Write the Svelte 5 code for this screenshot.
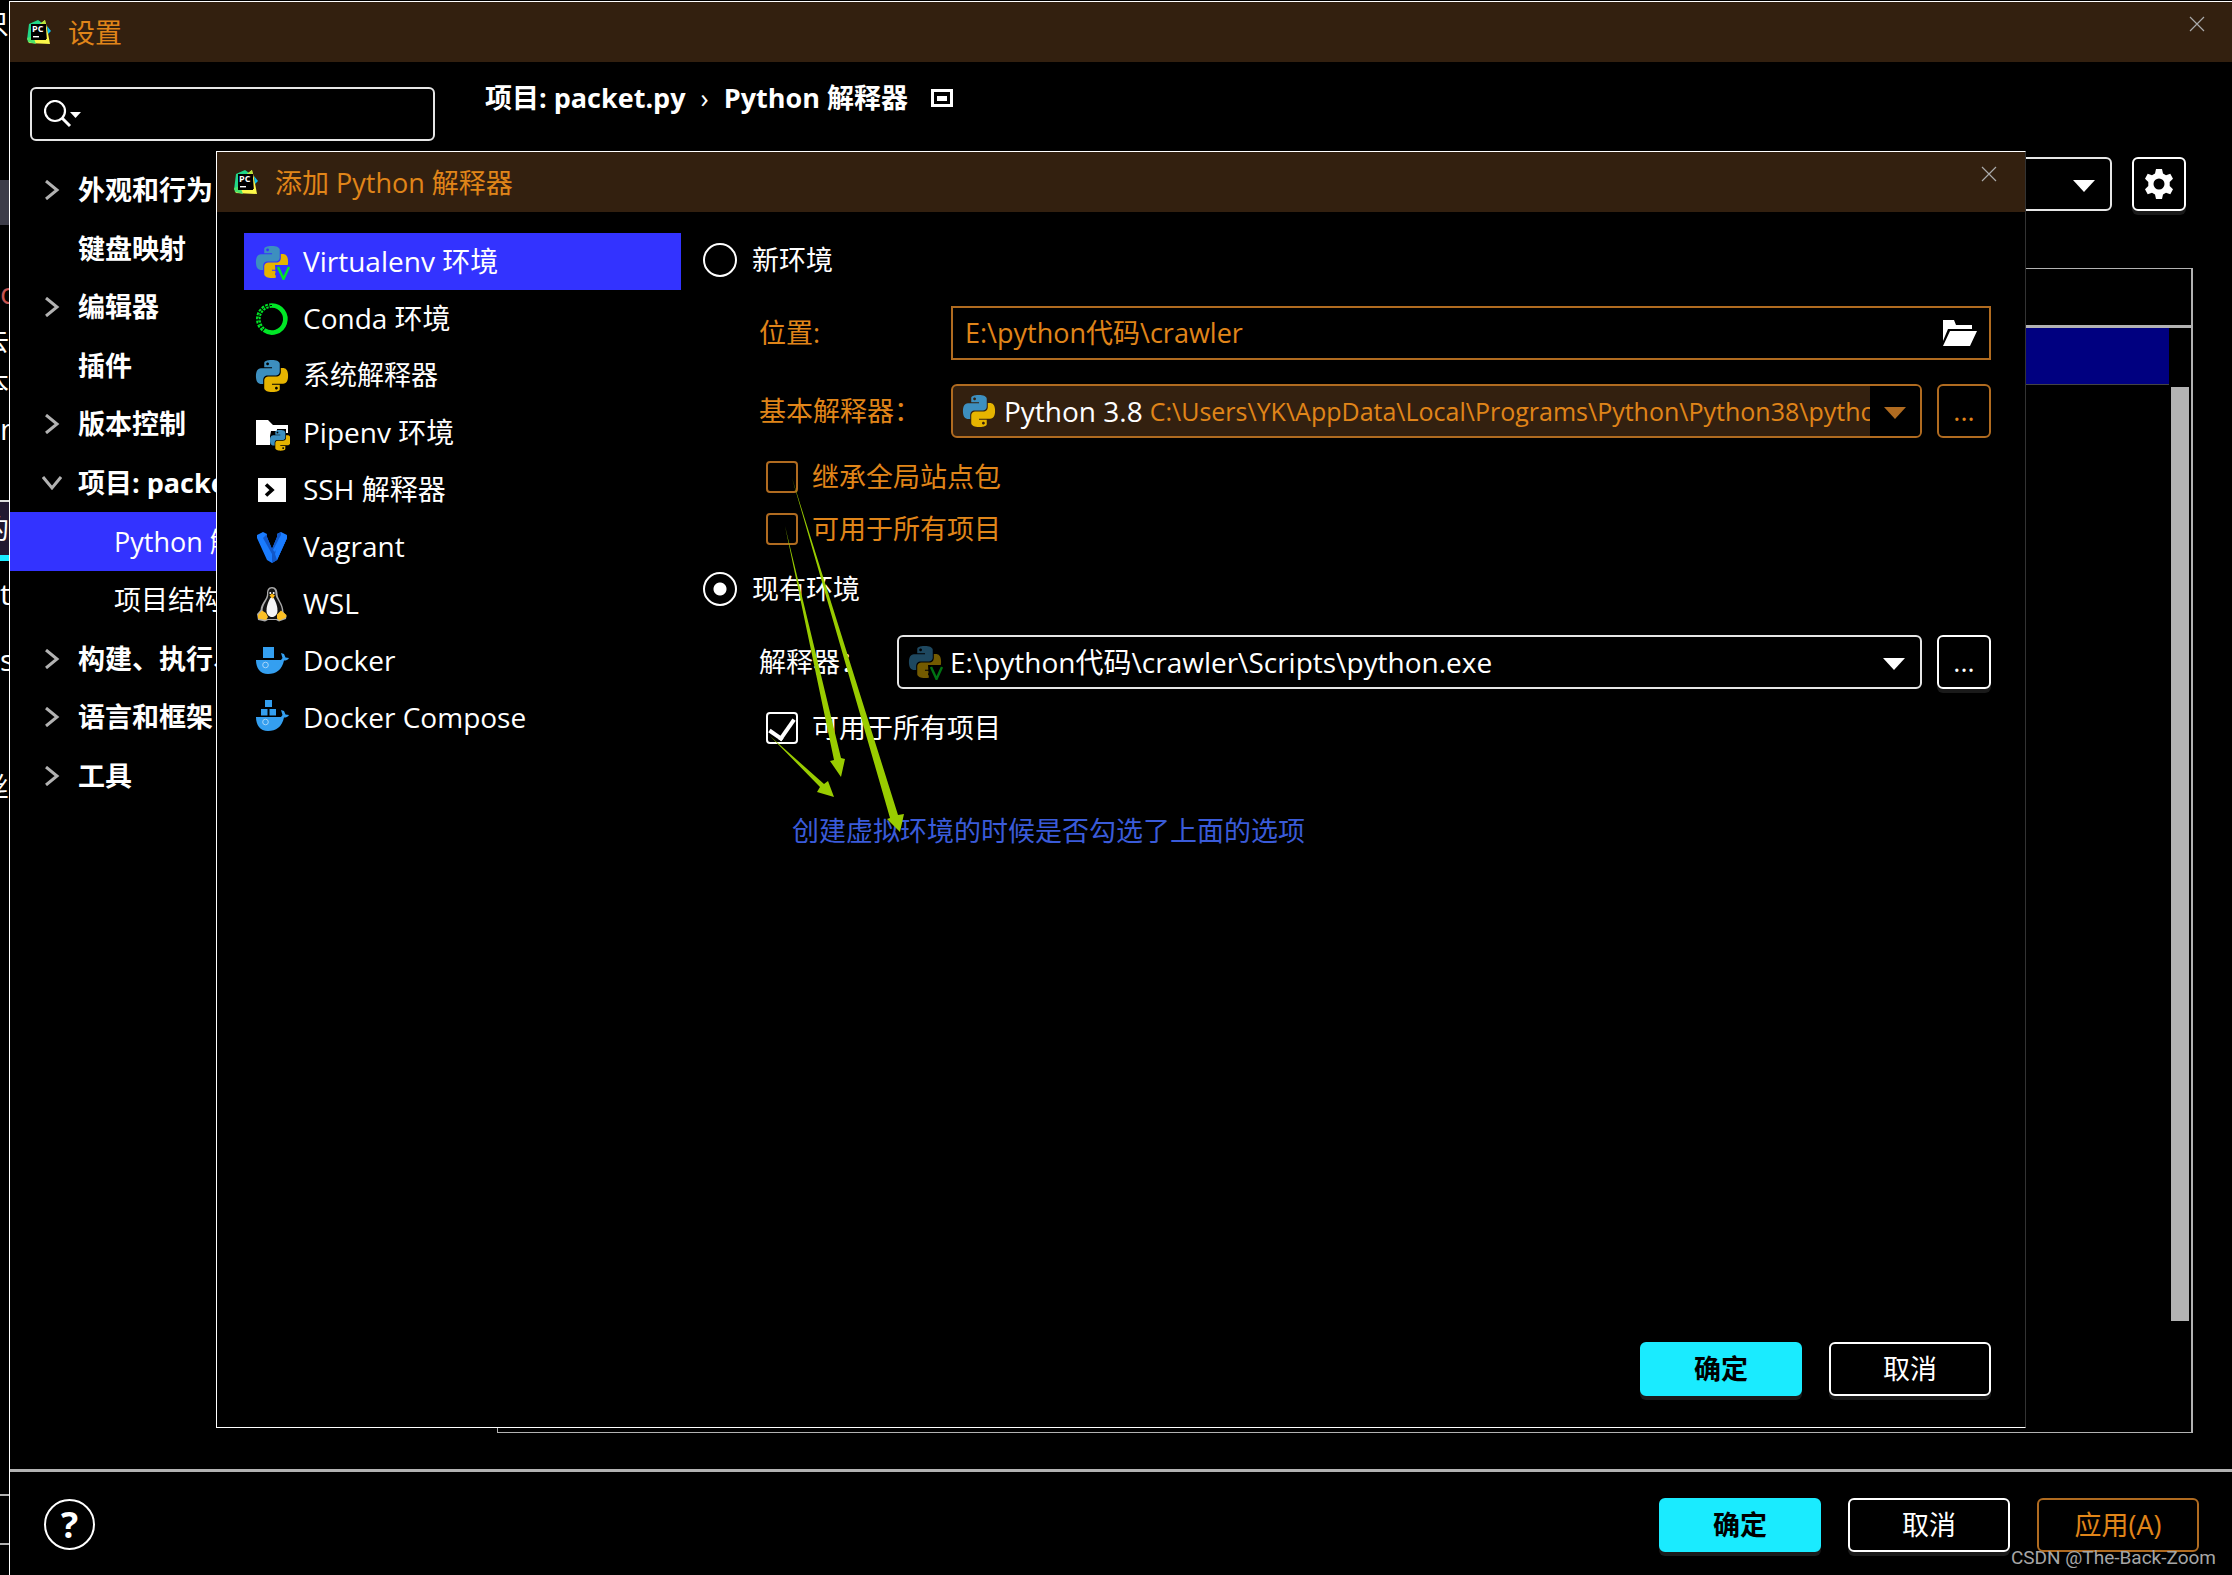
<script>
	let query = $state('');
	let envMode = $state('existing');
	let location = $state('E:\\python代码\\crawler');
	let inherit = $state(false);
	let shareNew = $state(false);
	let shareExisting = $state(true);
	let selectedEnv = $state('virtualenv');

	const tree = [
		{ label: '外观和行为', arrow: 'right' },
		{ label: '键盘映射' },
		{ label: '编辑器', arrow: 'right' },
		{ label: '插件' },
		{ label: '版本控制', arrow: 'right' },
		{ label: '项目: packet.py', arrow: 'down' },
		{ label: 'Python 解释器', child: true, selected: true },
		{ label: '项目结构', child: true },
		{ label: '构建、执行、部署', arrow: 'right' },
		{ label: '语言和框架', arrow: 'right' },
		{ label: '工具', arrow: 'right' }
	];

	const envs = [
		{ id: 'virtualenv', label: 'Virtualenv 环境' },
		{ id: 'conda', label: 'Conda 环境' },
		{ id: 'python', label: '系统解释器' },
		{ id: 'pipenv', label: 'Pipenv 环境' },
		{ id: 'ssh', label: 'SSH 解释器' },
		{ id: 'vagrant', label: 'Vagrant' },
		{ id: 'wsl', label: 'WSL' },
		{ id: 'docker', label: 'Docker' },
		{ id: 'compose', label: 'Docker Compose' }
	];

	// slices of the editor window that stick out on the left
	const slices = [
		{ h: 48, text: '只' },
		{ h: 132 },
		{ h: 45, kind: 'thumb' },
		{ h: 40 },
		{ h: 56, text: 'c', kind: 'red start' },
		{ h: 40, text: '去' },
		{ h: 44, text: '本' },
		{ h: 48, text: 'n', kind: 'start' },
		{ h: 47 },
		{ h: 55, text: '的', kind: 'tab' },
		{ h: 6, kind: 'cyan' },
		{ h: 66, text: 't', kind: 'start' },
		{ h: 66, text: 's', kind: 'start' },
		{ h: 70 },
		{ h: 48, text: '丝' },
		{ h: 683 },
		{ h: 2, kind: 'rule' },
		{ h: 47 },
		{ h: 2, kind: 'rule' }
	];

	const hasLatin = (text) => /[A-Za-z]/.test(text);
</script>

{#snippet snake()}
	<path fill="#3d8fbf" fill-rule="evenodd" d="M14.25.18l.9.2.73.26.59.3.45.32.34.34.25.34.16.33.1.3.04.26.02.2-.01.13V8.5l-.05.63-.13.55-.21.46-.26.38-.3.31-.33.25-.35.19-.35.14-.33.1-.3.07-.26.04-.21.02H8.77l-.69.05-.59.14-.5.22-.41.27-.33.32-.27.35-.2.36-.15.37-.1.35-.07.32-.04.27-.02.21v3.06H3.17l-.21-.03-.28-.07-.32-.12-.35-.18-.36-.26-.36-.36-.35-.46-.32-.59-.28-.73-.21-.88-.14-1.05-.05-1.23.06-1.22.16-1.04.24-.87.32-.71.36-.57.4-.44.42-.33.42-.24.4-.16.36-.1.32-.05.24-.01h.16l.06.01h8.16v-.83H6.18l-.01-2.75-.02-.37.05-.34.11-.31.17-.28.25-.26.31-.23.38-.2.44-.18.51-.15.58-.12.64-.1.71-.06.77-.04.84-.02 1.27.05zm-6.3 1.98l-.23.33-.08.41.08.41.23.34.33.22.41.09.41-.09.33-.22.23-.34.08-.41-.08-.41-.23-.33-.33-.22-.41-.09-.41.09z" />
	<path fill="#e6b400" fill-rule="evenodd" d="M21.04 6.11l.28.06.32.12.35.18.36.27.36.35.35.47.32.59.28.73.21.88.14 1.04.05 1.23-.06 1.23-.16 1.04-.24.86-.32.71-.36.57-.4.45-.42.33-.42.24-.4.16-.36.09-.32.05-.24.02-.16-.01h-8.22v.82h5.84l.01 2.76.02.36-.05.34-.11.31-.17.29-.25.25-.31.24-.38.2-.44.17-.51.15-.58.13-.64.09-.71.07-.77.04-.84.01-1.27-.04-1.07-.14-.9-.2-.73-.25-.59-.3-.45-.33-.34-.34-.25-.34-.16-.33-.1-.3-.04-.25-.02-.2.01-.13v-5.34l.05-.64.13-.54.21-.46.26-.38.3-.32.33-.24.35-.2.35-.14.33-.1.3-.06.26-.04.21-.02.13-.01h5.84l.69-.05.59-.14.5-.21.41-.28.33-.32.27-.35.2-.36.15-.36.1-.35.07-.32.04-.28.02-.21V6.07h2.09l.14.01zm-6.47 14.25l-.23.33-.08.41.08.41.23.33.33.23.41.08.41-.08.33-.23.23-.33.08-.41-.08-.41-.23-.33-.33-.23-.41-.08-.41.08z" />
{/snippet}

{#snippet icon(name)}
	<svg class="icon" viewBox="0 0 36 36" aria-hidden="true">
		{#if name === 'python' || name === 'virtualenv'}
			<g transform="translate(2 2) scale(1.333)">{@render snake()}</g>
			{#if name === 'virtualenv'}
				<path class="veil" d="M21 21h15v15H22z" />
				<path d="M24 23l5.500 12L35 23" fill="none" stroke="#00e626" stroke-width="2.400" />
			{/if}
		{:else if name === 'conda'}
			<path d="M18 4.500a13.500 13.500 0 1 1-8 24.500" fill="none" stroke="#00e626" stroke-width="4.600" />
			<path d="M18 4.500a13.500 13.500 0 0 0-8 24.500" fill="none" stroke="#00e626" stroke-width="4.600" stroke-dasharray="2.600 1.200" />
			<path d="M18 4.500a13.500 13.500 0 0 0-8 24.500" fill="none" stroke="#000" stroke-width="1" stroke-dasharray="2 2" />
		{:else if name === 'pipenv'}
			<path d="M2 5h12l5 5h15v20H2z" fill="#fff" />
			<path d="M17 16h6v-2h9v4h4v18H20v-6h-4v-9z" fill="#000" />
			<g transform="translate(16 15) scale(.86)">{@render snake()}</g>
		{:else if name === 'ssh'}
			<path d="M4 6h28v24H4z" fill="#fff" />
			<path d="M12 12.500l6 5.500-6 5.500" fill="none" stroke="#000" stroke-width="3.600" />
		{:else if name === 'vagrant'}
			<path d="M3 6l6-3 4 2v3l5 12 5-12V5l4-2 6 3v3l-10 22-5 3-5-3L3 9z" fill="#1a7cff" />
			<path d="M9 9l4-4v3l5 12v5zM27 3l-4 2v3l-5 12v14l5-3 10-22V6l-5 3-7 14-2-2 8-15z" fill="#1157c9" />
			<path d="M25 9l8-3v3L23 31l-2-6z" fill="#1a7cff" />
		{:else if name === 'wsl'}
			<path d="M18 1c-4 0-5 3-5 7 0 5-6 9-6.500 16L3 28l1 6 7 1.500 3-1.500h8l3 1.500 7-2.500.5-3-3-4c0-8-6-13-6-18 0-4-1.500-7-5.500-7z" fill="#aaa" />
			<path d="M18 2.500c-3 0-4 2.500-3.700 6 .3 5-5.800 9-5.800 17L12 33h12l4-7c0-9-6.500-13-6.500-18 0-3.500-1-5.500-3.500-5.500z" fill="#111" />
			<path d="M18 11c-2 0-5.500 8-5.500 13.500 0 4 2.500 6.500 5.500 6.500s5.500-2.500 5.500-6.500C23.500 19 20 11 18 11z" fill="#f5f5f5" />
			<path d="M15.500 9.500l2.500-2 3 2-2.500 3.200z" fill="#fcb814" />
			<path d="M8 24.500l4 2.500 2 4-2 3-8-1.500V29zM27 24.500l5.500 4.500-.5 2.500-6.500 3-2.500-2v-4z" fill="#fcc024" />
			<circle cx="16.300" cy="7" r="1" fill="#fff" /><circle cx="19.700" cy="7" r="1" fill="#fff" />
		{:else}
			<path d="M2 17h25l1.500-2-1.500-5 3 1 1.500 3.500 3.500.5c-1 2-3 2.500-5 2.500C28 27 22 31 14 31 6 31 2 25 2 17z" fill="#349ff0" />
			<circle cx="11.500" cy="22" r="2.800" fill="none" stroke="#a6d5fa" stroke-width="1" />
			{#if name === 'docker'}
				<path d="M9 4h11v11H9z" fill="#349ff0" />
			{:else}
				<path d="M7 9h6.500v6.500H7zM15.500 9H22v6.500h-6.500zM11 0h7v7h-7z" fill="#349ff0" />
			{/if}
		{/if}
	</svg>
{/snippet}

{#snippet appIcon()}
	<svg class="app-icon" viewBox="0 0 24 24" aria-hidden="true">
		<path d="M2 4l9-4 7 5v14H5L0 20z" fill="#21d789" />
		<path d="M18 0l-5 4 6 4 1 11-14 1-5 3 22 1-3-16z" fill="#fcf84a" />
		<path d="M18 0l-5 4 6 4z" fill="#b4e83c" />
		<path d="M20 6l4 5-3 3z" fill="#07c3f2" />
		<path d="M0 18l6-2 3 8-8-2z" fill="#4be36b" />
		<path d="M4 4h15v16H4z" fill="#000" />
		<text x="5" y="12" font-size="9" font-weight="700" fill="#fff">PC</text>
		<path d="M6 16h6v1.400H6z" fill="#fff" />
	</svg>
{/snippet}

{#snippet cross()}
	<svg class="cross" viewBox="0 0 16 16" aria-hidden="true"><path d="M1 1l14 14M15 1L1 15" /></svg>
{/snippet}

{#snippet triangle()}
	<svg class="triangle" viewBox="0 0 22 12" aria-hidden="true"><path d="M0 0h22L11 12z" /></svg>
{/snippet}

<div class="desktop">
	<div class="editor" aria-hidden="true">
		{#each slices as s}
			<div class="slice {s.kind ?? ''}" style:height="{s.h}px">{s.text ?? ''}</div>
		{/each}
	</div>

	<main class="settings">
		<header class="titlebar">
			{@render appIcon()}
			<h1>设置</h1>
			<button class="close" aria-label="关闭">{@render cross()}</button>
		</header>

		<div class="columns">
			<aside>
				<label class="search">
					<svg viewBox="0 0 38 28" aria-hidden="true">
						<circle cx="11" cy="11" r="10" fill="none" stroke="#fff" stroke-width="2.200" />
						<path d="M18 18l8 8" stroke="#fff" stroke-width="3" />
						<path d="M26 12h11l-5.500 6z" fill="#fff" />
					</svg>
					<input type="text" bind:value={query} aria-label="搜索" />
				</label>
				<ul class="tree">
					{#each tree as node}
						<li class:child={node.child} class:selected={node.selected}>
							<span class="arrow">
								{#if node.arrow}
									<svg class={node.arrow} viewBox="0 0 20 20" aria-hidden="true"><path d="M4 1l11 9-11 9" /></svg>
								{/if}
							</span>
							{node.label}
						</li>
					{/each}
				</ul>
			</aside>

			<section class="page">
				<nav class="crumbs">
					<span>项目: packet.py</span>
					<span class="sep">›</span>
					<span>Python 解释器</span>
					<svg viewBox="0 0 22 18" aria-hidden="true">
						<path d="M1.500 1.500h19v15h-19z" fill="none" stroke="#fff" stroke-width="3" />
						<path d="M6 7h10v5H6z" fill="#fff" />
					</svg>
				</nav>
				<div class="interpreter">
					<div class="combo">
						<select aria-label="Python 解释器"><option></option></select>
						{@render triangle()}
					</div>
					<button class="square" aria-label="选项">
						<svg viewBox="0 0 28 30" aria-hidden="true">
							<path fill="#fff" fill-rule="evenodd" d="M11 0h6l1 4.500 3 1.700 4.300-1.500 2.700 5-3.300 3.300v4l3.300 3.300-2.700 5-4.300-1.500-3 1.700L17 30h-6l-1-4.500-3-1.700-4.300 1.500-2.700-5L3.300 17v-4L0 9.700l2.700-5L7 6.200l3-1.700zM14 9.500a5.500 5.500 0 1 0 0 11 5.500 5.500 0 0 0 0-11z" />
						</svg>
					</button>
				</div>
				<div class="packages">
					<div class="head"></div>
					<div class="rows">
						<div class="row"></div>
						<div class="scrollbar"></div>
					</div>
				</div>
			</section>
		</div>

		<footer>
			<button class="help" aria-label="帮助">?</button>
			<button class="btn primary">确定</button>
			<button class="btn">取消</button>
			<button class="btn" disabled>应用(A)</button>
		</footer>

		<div class="dialog" role="dialog" aria-labelledby="dialog-title">
			<header class="titlebar">
				{@render appIcon()}
				<h2 id="dialog-title">添加 Python 解释器</h2>
				<button class="close" aria-label="关闭">{@render cross()}</button>
			</header>

			<div class="body">
				<div class="envs">
					{#each envs as env}
						<button class:selected={selectedEnv === env.id} onclick={() => (selectedEnv = env.id)}>
							{@render icon(env.id)}
							<span class:latin={hasLatin(env.label)}>{env.label}</span>
						</button>
					{/each}
				</div>

				<form>
					<label class="radio">
						<input type="radio" value="new" bind:group={envMode} />
						新环境
					</label>
					<div class="field muted first">
						<label for="location">位置:</label>
						<div class="path">
							<input id="location" type="text" bind:value={location} />
							<svg viewBox="0 0 34 26" aria-hidden="true">
								<path d="M0 0h11l2 5h16v4H5L0 21z" fill="#fff" />
								<path d="M7 11h27l-7 15H0z" fill="#fff" />
							</svg>
						</div>
					</div>
					<div class="field muted">
						<label for="base">基本解释器：</label>
						<div class="combo filled">
							{@render icon('python')}
							<span class="name latin">Python 3.8</span>
							<select id="base">
								<option>C:\Users\YK\AppData\Local\Programs\Python\Python38\python.exe</option>
							</select>
							<span class="drop">{@render triangle()}</span>
						</div>
						<button type="button" class="square" aria-label="浏览">...</button>
					</div>
					<div class="checks">
						<label class="check muted"><input type="checkbox" bind:checked={inherit} />继承全局站点包</label>
						<label class="check muted"><input type="checkbox" bind:checked={shareNew} />可用于所有项目</label>
					</div>
					<label class="radio second">
						<input type="radio" value="existing" bind:group={envMode} />
						现有环境
					</label>
					<div class="field existing">
						<label for="interpreter">解释器：</label>
						<div class="combo dim">
							{@render icon('virtualenv')}
							<select id="interpreter" class="latin"><option>E:\python代码\crawler\Scripts\python.exe</option></select>
							{@render triangle()}
						</div>
						<button type="button" class="square" aria-label="浏览">...</button>
					</div>
					<div class="checks">
						<label class="check"><input type="checkbox" bind:checked={shareExisting} />可用于所有项目</label>
					</div>
					<p class="note">创建虚拟环境的时候是否勾选了上面的选项</p>

					<!-- hand-drawn arrows from the tick boxes to the note -->
					<svg class="arrows" viewBox="0 0 210 360" aria-hidden="true">
						<path d="M89 2L187 342l-3 1 13 13 4-18-6 1z" />
						<path d="M82 50L131 284l-4 1 11 16 4-18-4-1z" />
						<path d="M67 260L117 311l-3 5 17 5-6-16-4 3z" />
					</svg>
				</form>
			</div>

			<div class="actions">
				<button class="btn primary">确定</button>
				<button class="btn">取消</button>
			</div>
		</div>

		<span class="watermark">CSDN @The-Back-Zoom</span>
	</main>
</div>

<style>
	:global(body) {
		background: #000;
	}
	.desktop {
		display: flex;
		min-height: 100vh;
		overflow: hidden;
		color: #fff;
		font-family: 'Open Sans', 'Noto Sans CJK SC', sans-serif;
		font-size: 27px;
		line-height: 36px;
	}
	.desktop * {
		box-sizing: border-box;
	}
	button,
	input,
	select {
		margin: 0;
		padding: 0;
		border: none;
		background: none;
		color: inherit;
		font: inherit;
		appearance: none;
		outline: none;
	}
	svg {
		flex: none;
		display: block;
	}
	h1,
	h2 {
		margin: 0;
		padding-top: 2px;
		color: #e08519;
		font-size: 27px;
		font-weight: 400;
	}
	.latin {
		font-size: 28px;
	}

	.editor {
		flex: none;
		width: 9px;
		height: 100vh;
		overflow: hidden;
	}
	.slice {
		display: flex;
		align-items: center;
		justify-content: flex-end;
		overflow: hidden;
	}
	.start { justify-content: flex-start; font-size: 30px; }
	.thumb { background: #3c3c48; }
	.red { color: #c75450; }
	.tab { background: #221830; border-top: 2px solid #ddd; }
	.cyan { background: #1aebff; }
	.rule { background: #b2b2b2; }

	.settings {
		position: relative;
		flex: 1;
		display: flex;
		flex-direction: column;
		margin-top: 1px;
		border-top: 1px solid #fff;
		border-left: 1px solid #fff;
	}
	.titlebar {
		display: flex;
		align-items: center;
		gap: 17px;
		height: 60px;
		padding: 0 27px 0 17px;
		background: #33200f;
	}
	.app-icon {
		width: 24px;
		height: 24px;
	}
	.close {
		align-self: flex-start;
		margin: 14px 0 0 auto;
	}
	.cross {
		width: 16px;
		height: 16px;
		fill: none;
		stroke: #aaa;
		stroke-width: 1.2;
	}

	.columns {
		flex: 1;
		display: flex;
	}
	aside {
		flex: none;
		width: 446px;
	}
	.search {
		display: flex;
		align-items: center;
		gap: 8px;
		height: 54px;
		margin: 25px 21px 20px 20px;
		padding: 0 12px;
		border: 2px solid #e6e6e6;
		border-radius: 6px;
	}
	.search svg {
		width: 38px;
		height: 28px;
	}
	.search input {
		flex: 1;
		min-width: 0;
	}
	.tree {
		display: grid;
		grid-template-rows: repeat(11, 1fr);
		height: 644px;
		margin: 0;
		padding: 0;
		list-style: none;
		font-weight: 700;
	}
	.tree li {
		display: flex;
		align-items: center;
		padding-left: 32px;
		white-space: nowrap;
	}
	.tree .child {
		padding-left: 68px;
		font-weight: 400;
	}
	.tree .selected {
		background: #3333ff;
	}
	.arrow {
		width: 36px;
	}
	.arrow svg {
		width: 20px;
		height: 20px;
		fill: none;
		stroke: #b2b2b2;
		stroke-width: 3;
	}
	.arrow .down {
		transform: rotate(90deg);
	}

	.page {
		flex: 1;
		display: flex;
		flex-direction: column;
		padding: 18px 39px 36px 29px;
	}
	.crumbs {
		display: flex;
		align-items: center;
		gap: 15px;
		font-weight: 700;
	}
	.crumbs svg {
		width: 22px;
		height: 18px;
		margin-left: 8px;
	}
	.sep {
		font-weight: 400;
	}
	.interpreter {
		display: flex;
		gap: 20px;
		margin: 41px 7px 57px 150px;
	}
	.packages {
		flex: 1;
		display: flex;
		flex-direction: column;
		margin-left: 12px;
		border: 1px solid #b2b2b2;
		border-right-width: 2px;
	}
	.head {
		height: 59px;
		border-bottom: 3px solid #b2b2b2;
	}
	.rows {
		flex: 1;
		display: flex;
		gap: 2px;
		padding-right: 2px;
	}
	.row {
		flex: 1;
		height: 57px;
		background: #000080;
		border-bottom: 1px solid #444;
	}
	.scrollbar {
		width: 18px;
		margin: 59px 0 111px;
		background: #b2b2b2;
	}

	.combo {
		flex: 1;
		display: flex;
		align-items: center;
		min-width: 0;
		height: 54px;
		padding: 0 15px 0 8px;
		border: 2px solid #e6e6e6;
		border-radius: 6px;
	}
	.combo select {
		flex: 1;
		min-width: 0;
		height: 50px;
	}
	.triangle {
		width: 22px;
		height: 12px;
		margin-top: 4px;
		fill: currentColor;
	}
	.square {
		flex: none;
		width: 54px;
		height: 54px;
		border: 2px solid #fff;
		border-radius: 6px;
		box-shadow: 0 4px 0 #1a1a1a;
	}
	.square svg {
		width: 28px;
		height: 30px;
		margin: 0 auto;
	}

	footer {
		display: flex;
		align-items: center;
		gap: 27px;
		height: 106px;
		padding: 2px 33px 0 34px;
		border-top: 3px solid #b2b2b2;
	}
	.help {
		width: 51px;
		height: 51px;
		margin-right: auto;
		border: 2px solid #fff;
		border-radius: 50%;
		font-size: 36px;
		font-weight: 700;
	}
	.btn {
		width: 162px;
		height: 54px;
		border: 2px solid #fff;
		border-radius: 6px;
		box-shadow: 0 4px 0 #1a1a1a;
	}
	.btn.primary {
		border-color: #1aebff;
		background: #1aebff;
		color: #000;
		font-weight: 700;
	}
	.btn:disabled {
		border-color: #b06b20;
		color: #e08519;
		box-shadow: none;
	}

	.dialog {
		position: absolute;
		inset: 149px 206px 147px 206px;
		display: flex;
		flex-direction: column;
		border: 1px solid #fff;
		border-right-color: #333;
		background: #000;
	}
	.dialog .titlebar {
		padding-right: 28px;
	}
	.body {
		flex: 1;
		display: flex;
		gap: 22px;
		padding: 21px 34px 0 27px;
	}
	.envs {
		flex: none;
		width: 437px;
	}
	.envs button {
		display: flex;
		align-items: center;
		gap: 13px;
		width: 100%;
		height: 57px;
		padding-left: 10px;
		text-align: left;
	}
	.envs span {
		padding-bottom: 2px;
	}
	.envs .selected {
		background: #3333ff;
	}
	.icon {
		width: 36px;
		height: 36px;
	}
	.veil {
		fill: #000;
	}
	.selected .veil {
		fill: #3333ff;
	}

	form {
		position: relative;
		flex: 1;
		min-width: 0;
	}
	.radio {
		display: flex;
		align-items: center;
		gap: 15px;
		height: 54px;
	}
	.radio.second {
		margin-top: 7px;
	}
	.radio input {
		width: 34px;
		height: 34px;
		border: 2px solid #fff;
		border-radius: 50%;
	}
	.radio input:checked {
		background: radial-gradient(circle, #fff 6px, transparent 7px);
	}
	.field {
		display: flex;
		align-items: center;
		margin-top: 24px;
		padding-left: 56px;
	}
	.field.first,
	.field.existing {
		margin-top: 19px;
	}
	.field > label {
		flex: none;
		width: 192px;
		white-space: nowrap;
	}
	.existing > label {
		width: 138px;
	}
	.field .square {
		margin-left: 15px;
	}
	.muted {
		color: #e08519;
	}
	.path {
		flex: 1;
		display: flex;
		align-items: center;
		height: 54px;
		padding: 0 12px;
		border: 2px solid #b06b20;
	}
	.path input {
		flex: 1;
	}
	.path svg {
		width: 34px;
		height: 26px;
	}
	.muted .combo,
	.muted .square,
	.muted input[type='checkbox'] {
		border-color: #b06b20;
		box-shadow: none;
	}
	.combo.filled {
		padding-right: 0;
		overflow: hidden;
		background: #33200f;
	}
	.filled select {
		font-size: 25px;
	}
	.name {
		margin: 0 7px;
		color: #fff;
	}
	.drop {
		display: flex;
		align-items: center;
		align-self: stretch;
		padding: 0 14px;
		background: #000;
		color: #b06b20;
	}
	.dim .icon {
		margin-right: 7px;
		opacity: 0.5;
	}
	.checks {
		margin-top: 13px;
		padding-left: 63px;
	}
	.check {
		display: flex;
		align-items: center;
		gap: 14px;
		height: 52px;
	}
	.check input {
		width: 32px;
		height: 32px;
		border: 2px solid #fff;
		border-radius: 4px;
	}
	.check input:checked {
		display: grid;
		place-items: center;
	}
	.check input:checked::after {
		content: '';
		width: 12px;
		height: 21px;
		margin-bottom: 5px;
		border: solid #fff;
		border-width: 0 4px 4px 0;
		transform: rotate(35deg);
	}
	.note {
		margin: 59px 0 0 89px;
		color: #3a5bd9;
	}
	/* free-hand overlay on top of the form */
	.arrows {
		position: absolute;
		top: 243px;
		left: 0;
		width: 210px;
		height: 360px;
		fill: #99cc00;
		pointer-events: none;
	}

	.actions {
		display: flex;
		justify-content: flex-end;
		gap: 27px;
		padding: 0 34px 31px;
	}
	.watermark {
		position: absolute;
		right: 16px;
		bottom: 5px;
		color: #a6a6a6;
		font-family: Roboto, sans-serif;
		font-size: 19px;
		line-height: 24px;
	}
</style>
